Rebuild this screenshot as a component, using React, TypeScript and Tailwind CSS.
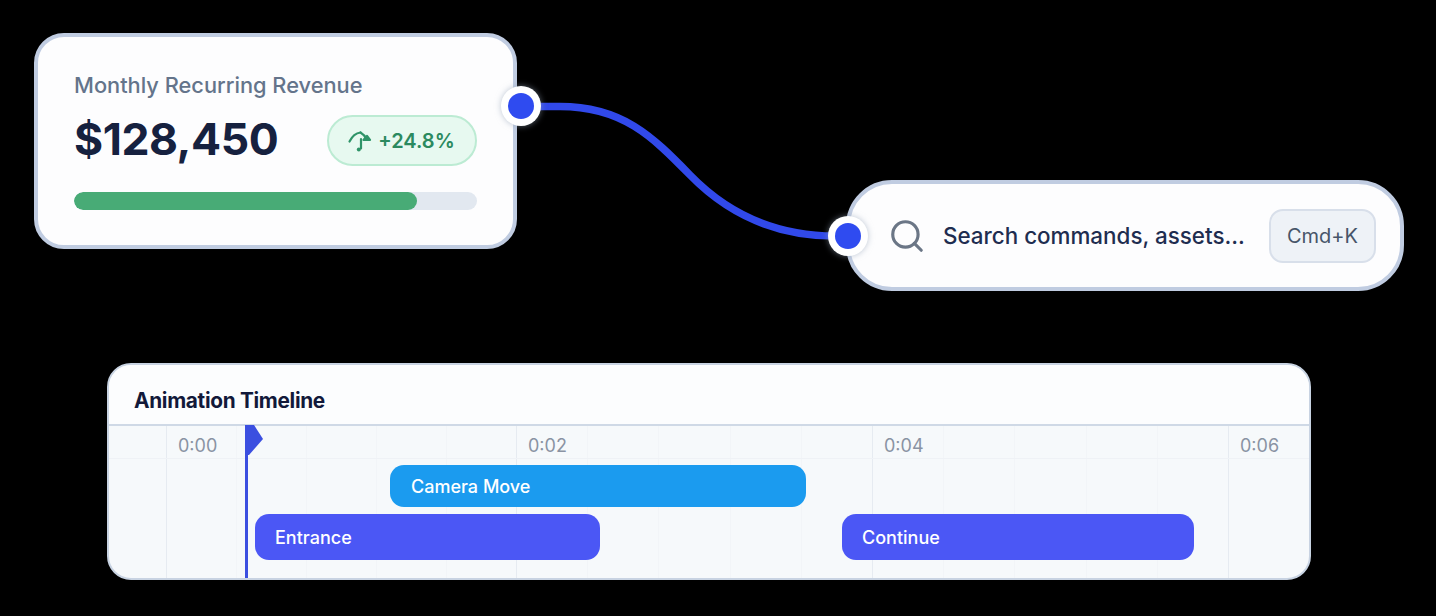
import { Search } from 'lucide-react';

const columns = [
  { width: 'w-[57px]', label: '' },
  { width: 'w-[350px]', label: '0:00' },
  { width: 'w-[356px]', label: '0:02' },
  { width: 'w-[356px]', label: '0:04' },
  { width: 'flex-1', label: '0:06' },
];

const Handle = ({ side }: { side: 'left' | 'right' }) => (
  <div
    className={`absolute flex h-10 w-10 items-center justify-center rounded-full bg-white shadow-[0_0_6px_rgba(148,163,184,0.6)] ${
      side === 'right' ? 'right-[-28px] top-[49px]' : 'left-[-22px] top-[32px]'
    }`}
  >
    <div className="h-[26px] w-[26px] rounded-full bg-[#2f4bf0]" />
  </div>
);

const TrendIcon = () => (
  <svg width="24" height="24" viewBox="0 0 24 24" fill="none" stroke="#2f9468" strokeWidth="2.2" strokeLinecap="round" strokeLinejoin="round">
    <path d="M1.5 12.5C4 7.5 8 4 12.5 3.5" />
    <path d="M12.5 3.5C15 5 17 7 18.5 10" />
    <path d="M15.5 11H22L19 7Z" fill="#2f9468" />
    <path d="M13 10V19.5" />
    <circle cx="10.8" cy="20.5" r="2" fill="#2f9468" stroke="none" />
  </svg>
);

const RevenueCard = () => (
  <div className="relative flex h-[216px] w-[483px] flex-col rounded-[30px] border-4 border-[#c0cce1] bg-[#fdfdfe] px-[36px] pt-[33px]">
    <div className="text-[21.8px] font-medium leading-[30px] text-[#64748b]">Monthly Recurring Revenue</div>
    <div className="mt-[15px] flex items-center justify-between">
      <div className="pb-[2px] text-[44.5px] font-bold leading-[49px] tracking-[-0.01em] text-[#16213f]">$128,450</div>
      <div className="flex h-[51px] w-[150px] items-center justify-center gap-[6px] rounded-full border-2 border-[#bcebd3] bg-[#e7f9f0] pr-[1px] text-[20px] font-semibold text-[#2b8a5f]">
        <TrendIcon />
        <span>+24.8%</span>
      </div>
    </div>
    <div className="mt-[26px] h-[18px] w-full overflow-hidden rounded-full bg-[#e2e8f0]">
      <div className="h-full w-[343px] rounded-full bg-[#48ab76]" />
    </div>
    <Handle side="right" />
  </div>
);

const SearchBar = () => (
  <div className="relative ml-[329px] mt-[147px] flex h-[111px] w-[558px] items-center rounded-[46px] border-4 border-[#c0cce1] bg-[#fdfdfe] pl-[38px] pr-[24px] pt-[1px]">
    <Search size={38} strokeWidth={2} color="#6b7686" className="shrink-0" />
    <span className="ml-[17px] whitespace-nowrap text-[22.4px] font-medium text-[#1f2d50]">Search commands, assets...</span>
    <div className="ml-auto flex h-[54px] w-[107px] items-center justify-center rounded-[14px] border-2 border-[#d8dfea] bg-[#eef2f7] text-[20px] text-[#475569]">
      Cmd+K
    </div>
    <Handle side="left" />
  </div>
);

const Timeline = () => (
  <div className="ml-[107px] mt-[72px] flex h-[217px] w-[1204px] flex-col overflow-hidden rounded-[24px] border-2 border-[#c8d3e2] bg-[#f6f9fb]">
    <div className="flex h-[61px] shrink-0 items-center border-b-2 border-[#cfd9e6] bg-[#fcfdfe] pl-[25px] pt-[13px]">
      <span className="text-[20.8px] font-bold tracking-[-0.015em] text-[#12193a]">Animation Timeline</span>
    </div>
    <div className="relative flex-1">
      {/* grid background */}
      <div className="absolute inset-0 flex">
        {columns.map((col, i) => (
          <div key={i} className={`flex h-full ${col.width} ${i > 0 ? 'border-l border-[#e6ebf1]' : ''}`}>
            {i > 0 && i < 4 &&
              [0, 1, 2, 3, 4].map(n => (
                <div key={n} className={`flex-1 ${n > 0 ? 'border-l border-[#f2f5f8]' : ''}`} />
              ))}
          </div>
        ))}
      </div>

      <div className="relative flex h-[33px] border-b border-[#eff2f6]">
        {columns.map((col, i) => (
          <div key={i} className={`${col.width} pl-3 pt-[7px] text-[18px] leading-[26px] text-[#8a93a3]`}>
            {col.label}
          </div>
        ))}
      </div>

      <div className="relative mt-[6px] flex">
        <div className="ml-[281px] flex h-[42px] w-[416px] items-center rounded-[14px] bg-[#1b9bef] pl-[21px] text-[18px] font-medium text-white">
          Camera Move
        </div>
      </div>
      <div className="relative mt-[7px] flex">
        <div className="ml-[146px] flex h-[46px] w-[345px] items-center rounded-[14px] bg-[#4b57f5] pl-[20px] text-[18px] font-medium text-white">
          Entrance
        </div>
        <div className="ml-[242px] flex h-[46px] w-[352px] items-center rounded-[14px] bg-[#4b57f5] pl-[20px] text-[18px] font-medium text-white">
          Continue
        </div>
      </div>

      {/* playhead */}
      <div className="absolute bottom-0 left-[136px] top-0 w-[3px] bg-[#3b4fe0]" />
      <svg className="absolute left-[136px] top-[-1px]" width="20" height="32" viewBox="0 0 20 32">
        <path d="M0 0H9L18 14L4 30H0Z" fill="#3b4fe0" />
      </svg>
    </div>
  </div>
);

const App = () => {
  return (
    <div className="relative h-[616px] w-[1436px] overflow-hidden bg-black pt-[33px] font-['Inter',sans-serif]">
      {/* connector between the two nodes */}
      <svg className="absolute inset-0" width="1436" height="616" viewBox="0 0 1436 616" fill="none">
        <path d="M530 106.500H560C622 106.500 652 136 690 175C726 212 772 236 835 236" stroke="#3149ea" strokeWidth="7.5" />
      </svg>

      <div className="flex items-start pl-[34px]">
        <RevenueCard />
        <SearchBar />
      </div>
      <Timeline />
    </div>
  );
};

export default App;
